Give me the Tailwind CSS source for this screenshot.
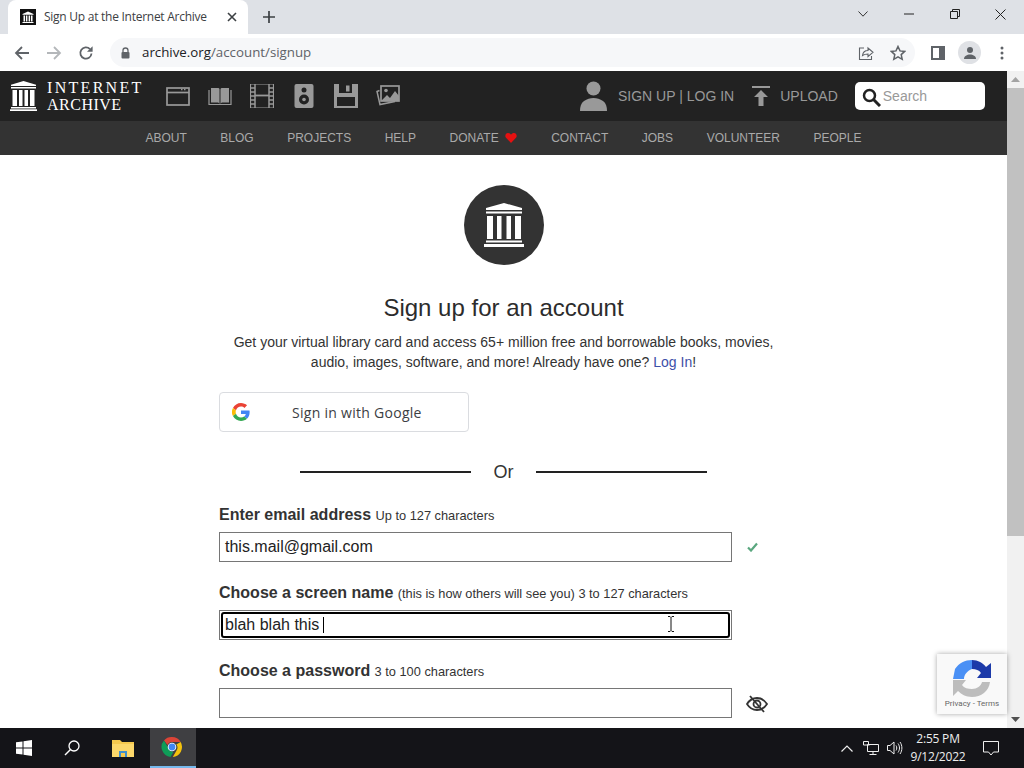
<!DOCTYPE html>
<html lang="en">
<head>
<meta charset="utf-8">
<title>Sign Up at the Internet Archive</title>
<script src="https://cdn.jsdelivr.net/npm/@tailwindcss/browser@4"></script>
</head>
<body class="m-0 overflow-hidden bg-white">
<div class="w-[1024px] h-[768px] flex flex-col overflow-hidden relative font-['Liberation_Sans',Arial,sans-serif]">

  <!-- Tab strip -->
  <div class="h-[34px] shrink-0 bg-[#dee1e6] flex items-end pl-[8px] relative">
    <div class="w-[240px] h-[34px] bg-white rounded-t-[8px] flex items-center pl-[12px] pr-[11px]">
      <svg class="w-[16px] h-[16px] shrink-0" viewBox="0 0 16 16"><rect width="16" height="16" fill="#111"/><path d="M2.5 5 8 2.5 13.5 5v.8h-11zM3.5 6.5h1.6v6H3.5zM6 6.5h1.4v6H6zM8.6 6.5H10v6H8.6zM10.9 6.5h1.6v6h-1.6zM2.5 13h11v1h-11z" fill="#fff"/></svg>
      <span class="ml-[8px] text-[12px] text-[#3c4043] font-['Open_Sans',sans-serif] whitespace-nowrap flex-1 tracking-[-0.26px]">Sign Up at the Internet Archive</span>
      <svg class="w-[10px] h-[10px] shrink-0" viewBox="0 0 10 10"><path d="M1 1l8 8M9 1l-8 8" stroke="#3c4043" stroke-width="1.6"/></svg>
    </div>
    <svg class="w-[12px] h-[12px] ml-[15px] mb-[11px]" viewBox="0 0 12 12"><path d="M6 0v12M0 6h12" stroke="#3c4043" stroke-width="1.7"/></svg>
    <div class="ml-auto flex items-center h-[28px] self-start">
      <svg class="w-[10px] h-[6px] mr-[36px]" viewBox="0 0 10 6"><path d="M.5.5 5 5.2 9.5.5" fill="none" stroke="#333" stroke-width="1"/></svg>
      <svg class="w-[10px] h-[10px] mr-[36px]" viewBox="0 0 10 10"><path d="M0 5h10" stroke="#222" stroke-width="1"/></svg>
      <svg class="w-[10px] h-[10px] mr-[35px]" viewBox="0 0 10 10"><path d="M.5 2.5h7v7h-7zM2.5 2.5v-2h7v7h-2" fill="none" stroke="#222" stroke-width="1"/></svg>
      <svg class="w-[11px] h-[11px] mr-[18px]" viewBox="0 0 11 11"><path d="M.5.5l10 10M10.5.5l-10 10" stroke="#222" stroke-width="1"/></svg>
    </div>
  </div>

  <!-- Toolbar -->
  <div class="h-[37px] shrink-0 bg-white flex items-center">
    <svg class="w-[16px] h-[16px] ml-[14px]" viewBox="0 0 16 16"><path d="M15 8H2M8 2 2 8l6 6" fill="none" stroke="#5f6368" stroke-width="1.8"/></svg>
    <svg class="w-[16px] h-[16px] ml-[16px]" viewBox="0 0 16 16"><path d="M1 8h13M8 2l6 6-6 6" fill="none" stroke="#b4b7ba" stroke-width="1.8"/></svg>
    <svg class="w-[16px] h-[16px] ml-[16px]" viewBox="0 0 16 16"><path d="M13.5 8.5A5.6 5.6 0 1 1 12 4.2" fill="none" stroke="#5f6368" stroke-width="1.8"/><path d="M14.6 1.2v5.6H9z" fill="#5f6368"/></svg>
    <div class="ml-[16px] w-[805px] h-[29px] bg-[#f6f7f9] rounded-full flex items-center pl-[10px]">
      <svg class="w-[11px] h-[12px] shrink-0" viewBox="0 0 11 12"><path d="M3 5V3.5a2.5 2.5 0 0 1 5 0V5" fill="none" stroke="#5f6368" stroke-width="1.3"/><rect x="1.5" y="5" width="8" height="6.5" rx="1" fill="#5f6368"/></svg>
      <span class="ml-[11px] text-[13.3px] font-['Open_Sans',sans-serif] text-[#5f6368] whitespace-nowrap"><span class="text-[#202124]">archive.org</span>/account/signup</span>
      <svg class="w-[16px] h-[16px] ml-auto" viewBox="0 0 16 16"><path d="M6 3H1.5v11.5h12V11" fill="none" stroke="#5f6368" stroke-width="1.1"/><path d="M4.5 10.5C5 7 7.500 5.500 10 5.500V3l5 4.300-5 4.200V9C7.500 9 6 9.500 4.500 10.500z" fill="none" stroke="#5f6368" stroke-width="1.100"/></svg>
      <svg class="w-[16px] h-[16px] ml-[16px] mr-[9px]" viewBox="0 0 16 16"><path d="M8 1.500l2 4.400 4.700.5-3.500 3.200 1 4.700L8 11.900l-4.200 2.400 1-4.700L1.300 6.400 6 5.900z" fill="none" stroke="#5f6368" stroke-width="1.500"/></svg>
    </div>
    <svg class="w-[14px] h-[14px] ml-[16px]" viewBox="0 0 14 14"><rect width="14" height="14" fill="#5f6368"/><rect x="2" y="2" width="6" height="10" fill="#fff"/></svg>
    <div class="ml-[13px] w-[23px] h-[23px] rounded-full bg-[#dfe1e5] flex items-center justify-center">
      <svg class="w-[14px] h-[14px]" viewBox="0 0 14 14"><circle cx="7" cy="4" r="3" fill="#5f6368"/><path d="M1 13c0-3 3-4.500 6-4.500s6 1.500 6 4.500z" fill="#5f6368"/></svg>
    </div>
    <svg class="w-[4px] h-[14px] ml-[19px]" viewBox="0 0 4 14"><circle cx="2" cy="2" r="1.500" fill="#5f6368"/><circle cx="2" cy="7" r="1.500" fill="#5f6368"/><circle cx="2" cy="12" r="1.500" fill="#5f6368"/></svg>
  </div>

  <!-- Viewport -->
  <div class="h-[657px] shrink-0 flex relative overflow-hidden">
    <main class="w-[1007px] shrink-0 flex flex-col bg-white">
      <!-- IA top bar -->
      <div class="h-[50px] shrink-0 bg-[#222222] flex items-center pl-[10px]">
        <svg class="w-[27px] h-[30px] shrink-0" viewBox="0 0 27 30"><path d="M13.500 0 26 3.800V5H1V3.800z" fill="#fff"/><rect x="1" y="6" width="25" height="1.500" fill="#fff"/><path d="M2.500 9h4.500v16H2.500zM9 9h3.500v16H9zM14.500 9H18v16h-3.500zM20 9h4.500v16H20z" fill="#fff"/><rect x="1" y="26" width="25" height="1.500" fill="#fff"/><rect y="28.300" width="27" height="1.700" fill="#fff"/></svg>
        <div class="ml-[10px] w-[98px] font-['Liberation_Serif',serif] text-white text-[16px] leading-[17px] whitespace-nowrap"><span class="tracking-[2.3px]">INTERNET</span><br><span class="tracking-[0.5px]">ARCHIVE</span></div>
        <div class="ml-[21px] flex items-center gap-[18px]">
          <svg class="w-[24px] h-[24px]" viewBox="0 0 24 24"><rect x="1" y="4" width="22" height="17" fill="none" stroke="#999" stroke-width="1.700"/><path d="M1 8.500h22" stroke="#999" stroke-width="1.700"/><path d="M15 5.500h1.500M18 5.500h1.500" stroke="#999" stroke-width="1.500"/></svg>
          <svg class="w-[24px] h-[24px]" viewBox="0 0 24 24"><path d="M3 4h7.500c.7.200 1 .6 1 1.200V20c-.5-1-1-1.500-2-1.500H3zM21 4h-7.500c-.7.200-1 .6-1 1.200V20c.5-1 1-1.500 2-1.500H21z" fill="#999"/><path d="M1 6v14.500h22V6" fill="none" stroke="#999" stroke-width="1.200"/></svg>
          <svg class="w-[24px] h-[24px]" viewBox="0 0 24 24"><path d="M.5 0h23v24H.500z" fill="none" stroke="#999" stroke-width="1.200"/><path d="M5 0v24M19 0v24" stroke="#999" stroke-width="1.500"/><path d="M5 11.500h14" stroke="#999" stroke-width="1.800"/><path d="M0 4h5M0 8h5M0 12h5M0 16h5M0 20h5M19 4h5M19 8h5M19 12h5M19 16h5M19 20h5" stroke="#999" stroke-width="1.400"/></svg>
          <svg class="w-[24px] h-[24px]" viewBox="0 0 24 24"><rect x="2.500" y="0" width="19" height="24" rx="2" fill="#999"/><circle cx="12" cy="6" r="2.500" fill="#222"/><circle cx="12" cy="15.500" r="5" fill="#222"/><circle cx="12" cy="15.500" r="1.800" fill="#999"/></svg>
          <svg class="w-[24px] h-[24px]" viewBox="0 0 24 24"><path d="M0 0h24v24H0z" fill="#999"/><path d="M5 0h13v9H5z" fill="#222"/><rect x="12" y="1.500" width="3.500" height="6" fill="#999"/><rect x="3" y="13" width="18" height="9" fill="#222"/></svg>
          <svg class="w-[24px] h-[24px]" viewBox="0 0 24 24"><rect x="5" y="2" width="18" height="15" fill="none" stroke="#999" stroke-width="1.700"/><path d="M5 17l6-6 3 3 5-7 4 5v5z" fill="#999"/><circle cx="10" cy="6.500" r="1.800" fill="#999"/><path d="M3.500 6.500 1 7.500l3 13 15-3" fill="none" stroke="#999" stroke-width="1.500"/></svg>
        </div>
        <svg class="w-[27px] h-[30px] ml-[180px] shrink-0" viewBox="0 0 27 30"><circle cx="13.500" cy="7.500" r="7" fill="#999"/><path d="M0 30c0-4 1-8 4-10 3-2 6-3 9.500-3s6.500 1 9.500 3c3 2 4 6 4 10z" fill="#999"/></svg>
        <span class="ml-[11px] text-[14px] text-[#999] whitespace-nowrap">SIGN UP | LOG IN</span>
        <svg class="w-[18px] h-[20px] ml-[18px] shrink-0" viewBox="0 0 18 20"><rect width="18" height="2" fill="#999"/><path d="M9 4 16 11h-4.500v9h-5v-9H2z" fill="#999"/></svg>
        <span class="ml-[10px] text-[14px] text-[#999] whitespace-nowrap">UPLOAD</span>
        <div class="ml-[17px] w-[130px] h-[28px] bg-white rounded-[5px] flex items-center pl-[7px]">
          <svg class="w-[19px] h-[19px] shrink-0 mt-[2px]" viewBox="0 0 19 19"><circle cx="7.500" cy="7.500" r="5.500" fill="none" stroke="#222" stroke-width="2.500"/><path d="M11.500 11.500 18 18" stroke="#222" stroke-width="3"/></svg>
          <span class="ml-[2px] mt-[1px] text-[14px] text-[#999]">Search</span>
        </div>
      </div>
      <!-- IA nav -->
      <nav class="h-[34px] shrink-0 bg-[#333333] flex items-center justify-center gap-[33.500px] text-[12px] text-[#aaaaaa] whitespace-nowrap">
        <span>ABOUT</span><span>BLOG</span><span>PROJECTS</span><span>HELP</span>
        <span class="flex items-center">DONATE<svg class="w-[12px] h-[10px] ml-[6px] mr-[1px]" viewBox="0 0 12 10"><path d="M6 10 .8 4.500C-.5 2.500 1 0 3 0c1.300 0 2.300.700 3 1.700C6.700.700 7.700 0 9 0c2 0 3.500 2.500 2.200 4.500z" fill="#e51111"/></svg></span>
        <span>CONTACT</span><span>JOBS</span><span>VOLUNTEER</span><span>PEOPLE</span>
      </nav>
      <!-- Form -->
      <div class="w-[569px] mx-auto flex flex-col pt-[30px]">
        <div class="w-[80px] h-[80px] rounded-full bg-[#333333] self-center flex items-center justify-center">
          <svg class="w-[40px] h-[44px]" viewBox="0 0 40 44"><path d="M20 0 38 5v2H2V5z" fill="#fff"/><rect x="2" y="8.500" width="36" height="2" fill="#fff"/><path d="M3 13h6v23H3zM13 13h4.500v23H13zM22.500 13H27v23h-4.500zM31 13h6v23h-6z" fill="#fff"/><rect x="2" y="37.500" width="36" height="2" fill="#fff"/><rect y="41" width="40" height="3" fill="#fff"/></svg>
        </div>
        <h1 class="mt-[28px] text-center text-[24px] leading-[30px] text-[#2c2c2c] font-normal">Sign up for an account</h1>
        <p class="mt-[9px] text-center text-[14px] leading-[20px] text-[#333333]">Get your virtual library card and access 65+ million free and borrowable books, movies,<br>audio, images, software, and more! Already have one? <span class="text-[#3d50a8]">Log In</span>!</p>
        <div class="mt-[20px] w-[250px] h-[40px] border border-[#dadce0] rounded-[4px] bg-white flex items-center pl-[12px]">
          <svg class="w-[18px] h-[18px] shrink-0" viewBox="0 0 48 48"><path fill="#EA4335" d="M24 9.500c3.500 0 6.700 1.200 9.200 3.600l6.900-6.900C35.900 2.400 30.500 0 24 0 14.600 0 6.500 5.400 2.600 13.200l8 6.200C12.500 13.700 17.800 9.500 24 9.500z"/><path fill="#4285F4" d="M47 24.500c0-1.600-.1-3.100-.4-4.500H24v9h12.900c-.6 3-2.200 5.500-4.700 7.200l7.700 6c4.500-4.200 7.100-10.300 7.100-17.700z"/><path fill="#FBBC05" d="M10.500 28.600a14.500 14.500 0 0 1 0-9.200l-8-6.200a24 24 0 0 0 0 21.600z"/><path fill="#34A853" d="M24 48c6.500 0 11.900-2.100 15.900-5.800l-7.700-6c-2.200 1.500-4.900 2.300-8.200 2.300-6.200 0-11.500-4.200-13.400-9.900l-8 6.200C6.500 42.600 14.600 48 24 48z"/></svg>
          <span class="ml-[42px] text-[14px] font-['Open_Sans',sans-serif] font-medium tracking-[0.28px] text-[#3c4043] whitespace-nowrap">Sign in with Google</span>
        </div>
        <div class="mt-[28px] ml-[81px] w-[407px] h-[24px] flex items-center">
          <span class="w-[171px] h-[2px] bg-[#222]"></span>
          <span class="w-[65px] text-center text-[18px] text-[#333]">Or</span>
          <span class="w-[171px] h-[2px] bg-[#222]"></span>
        </div>

        <label class="mt-[21px] h-[20px] leading-[20px] text-[16px] font-bold text-[#333] whitespace-nowrap">Enter email address <span class="text-[12.8px] font-normal">Up to 127 characters</span></label>
        <div class="mt-[7px] flex items-center">
          <div class="w-[513px] h-[30px] border border-[#767676] flex items-center pl-[5px] text-[16px] text-[#222]">this.mail@gmail.com</div>
          <svg class="w-[11px] h-[10px] ml-[15px]" viewBox="0 0 11 10"><path d="M1 5.500l3 3 6-7" fill="none" stroke="#5aa77f" stroke-width="2.200"/></svg>
        </div>

        <label class="mt-[21px] h-[20px] leading-[20px] text-[16px] font-bold text-[#333] whitespace-nowrap">Choose a screen name <span class="text-[12.8px] font-normal">(this is how others will see you) 3 to 127 characters</span></label>
        <div class="mt-[7px] flex items-center">
          <div class="w-[513px] h-[30px] border border-[#767676] p-[1px]">
            <div class="h-full border-2 border-black rounded-[3px] flex items-center pl-[2px] text-[16px] text-[#222]">blah blah this <span class="w-[1px] h-[16px] bg-black ml-[4px]"></span></div>
          </div>
        </div>

        <label class="mt-[21px] h-[20px] leading-[20px] text-[16px] font-bold text-[#333] whitespace-nowrap">Choose a password <span class="text-[12.8px] font-normal">3 to 100 characters</span></label>
        <div class="mt-[7px] flex items-center">
          <div class="w-[513px] h-[30px] border border-[#767676]"></div>
          <svg class="w-[22px] h-[18px] ml-[14px] mt-[1px]" viewBox="0 0 22 18"><path d="M1 9c2.500-4 6-6 10-6s7.500 2 10 6c-2.500 4-6 6-10 6S3.500 13 1 9z" fill="none" stroke="#333" stroke-width="1.800"/><circle cx="11" cy="9" r="3.500" fill="none" stroke="#333" stroke-width="1.800"/><path d="M4 1l14 16" stroke="#333" stroke-width="1.800"/></svg>
        </div>
      </div>
    </main>

    <!-- Scrollbar -->
    <div class="w-[17px] shrink-0 bg-[#f1f1f1] flex flex-col items-center">
      <div class="h-[17px] w-full flex items-center justify-center"><svg class="w-[9px] h-[5px]" viewBox="0 0 9 5"><path d="M4.500 0 9 5H0z" fill="#a3a3a3"/></svg></div>
      <div class="w-full h-[448px] bg-[#c1c1c1]"></div>
      <div class="mt-auto h-[17px] w-full flex items-center justify-center"><svg class="w-[9px] h-[5px]" viewBox="0 0 9 5"><path d="M0 0h9L4.500 5z" fill="#505050"/></svg></div>
    </div>

    <!-- reCAPTCHA badge -->
    <div class="absolute left-[937px] top-[583px] w-[70px] h-[60px] bg-[#f9f9f9] shadow-[0_0_5px_rgba(0,0,0,0.35)] flex flex-col items-center pt-[6px]">
      <svg class="w-[38px] h-[37px]" viewBox="0 0 38 37"><path d="M19 0C12 0 6 3 2 9L0 19H11C11 15 14 11 19 9z" fill="#4a90f5"/><path d="M19 0C25 0 30 3 33 7L38 3V18H24L28 13C26 10 23 9 19 9z" fill="#1c3aa9"/><path d="M0 20H13L9 25C11 28 15 29 19 29C24 29 28 26 29 22H37C36 31 28 37 19 37C13 37 8 34 5 31L0 36z" fill="#bdbdbd"/></svg>
      <span class="mt-[2px] text-[8px] leading-[10px] text-[#666] whitespace-nowrap font-['Roboto',sans-serif]">Privacy - Terms</span>
    </div>

    <!-- Text cursor -->
    <svg class="absolute left-[667px] top-[545px] w-[8px] h-[16px]" viewBox="0 0 8 16"><path d="M1 .5h2l1 1 1-1h2M4 1.500v13M1 15.500h2l1-1 1 1h2" fill="none" stroke="#111" stroke-width="1"/></svg>
  </div>

  <!-- Taskbar -->
  <div class="h-[40px] shrink-0 bg-[#141418] flex items-center text-white">
    <svg class="w-[16px] h-[16px] ml-[16px]" viewBox="0 0 16 16"><path d="M0 2.300 6.500 1.400v6.100H0zM7.500 1.300 16 0v7.500H7.500zM0 8.500h6.500v6.100L0 13.700zM7.500 8.500H16V16l-8.500-1.300z" fill="#fff"/></svg>
    <svg class="w-[16px] h-[16px] ml-[32px]" viewBox="0 0 16 16"><circle cx="10" cy="6" r="5" fill="none" stroke="#fff" stroke-width="1.300"/><path d="M6.500 9.500 1 15" stroke="#fff" stroke-width="1.500"/></svg>
    <svg class="w-[22px] h-[18px] ml-[32px]" viewBox="0 0 22 18"><path d="M0 1h8l2 2h12v15H0z" fill="#f5c94e"/><rect y="5" width="22" height="13" fill="#fcd86b"/><rect x="7" y="12" width="8" height="6" fill="#3f8fcc"/><rect x="9" y="14" width="4" height="4" fill="#f5c94e"/></svg>
    <div class="ml-[16px] w-[46px] h-[40px] bg-[#3f3f42] border-b-2 border-[#76b9ed] flex items-center pl-[11px]">
      <svg class="w-[22px] h-[22px]" viewBox="0 0 22 22"><path d="M11 1a10 10 0 0 1 8.660 5H11a5 5 0 0 0-4.500 2.900L3 4.400A10 10 0 0 1 11 1z" fill="#db4437"/><path d="M19.660 6A10 10 0 0 1 11.800 21l4-6.900A5 5 0 0 0 15.300 8.500z" fill="#f4c20d"/><path d="M3 4.400 7 11.500a5 5 0 0 0 5.500 4.300L9.500 20.900A10 10 0 0 1 3 4.400z" fill="#0f9d58"/><circle cx="11" cy="11" r="4.300" fill="#fff"/><circle cx="11" cy="11" r="3.400" fill="#4285f4"/></svg>
    </div>
    <svg class="w-[12px] h-[7px] ml-[645px]" viewBox="0 0 12 7"><path d="M.5 6.500 6 1l5.500 5.500" fill="none" stroke="#eee" stroke-width="1.200"/></svg>
    <svg class="w-[16px] h-[14px] ml-[10px]" viewBox="0 0 16 14"><path d="M6.500 4H.5V.5h5V4M4.500 3.500h11v7h-11zM10 10.500v2.500M6.500 13.500h7" fill="none" stroke="#eee" stroke-width="1"/></svg>
    <svg class="w-[16px] h-[14px] ml-[8px]" viewBox="0 0 16 14"><path d="M.5 4.500h2.500l4-3.500v12l-4-3.500H.5z" fill="none" stroke="#eee" stroke-width="1"/><path d="M9 4.500c1 1.500 1 3.500 0 5M11 2.500c2 3 2 6 0 9M13 1c2.500 3.500 2.500 8.500 0 12" fill="none" stroke="#eee" stroke-width="1"/></svg>
    <div class="ml-[-1px] w-[72px] text-center text-[12px] leading-[18px] text-[#eee] font-['Open_Sans',sans-serif] whitespace-nowrap tracking-[-0.2px]">2:55 PM<br>9/12/2022</div>
    <svg class="w-[16px] h-[15px] ml-[9px]" viewBox="0 0 16 15"><path d="M.5.500h15v10.500H10.500L8 14 5.500 11H.5z" fill="none" stroke="#eee" stroke-width="1"/></svg>
  </div>
</div>
</body>
</html>
